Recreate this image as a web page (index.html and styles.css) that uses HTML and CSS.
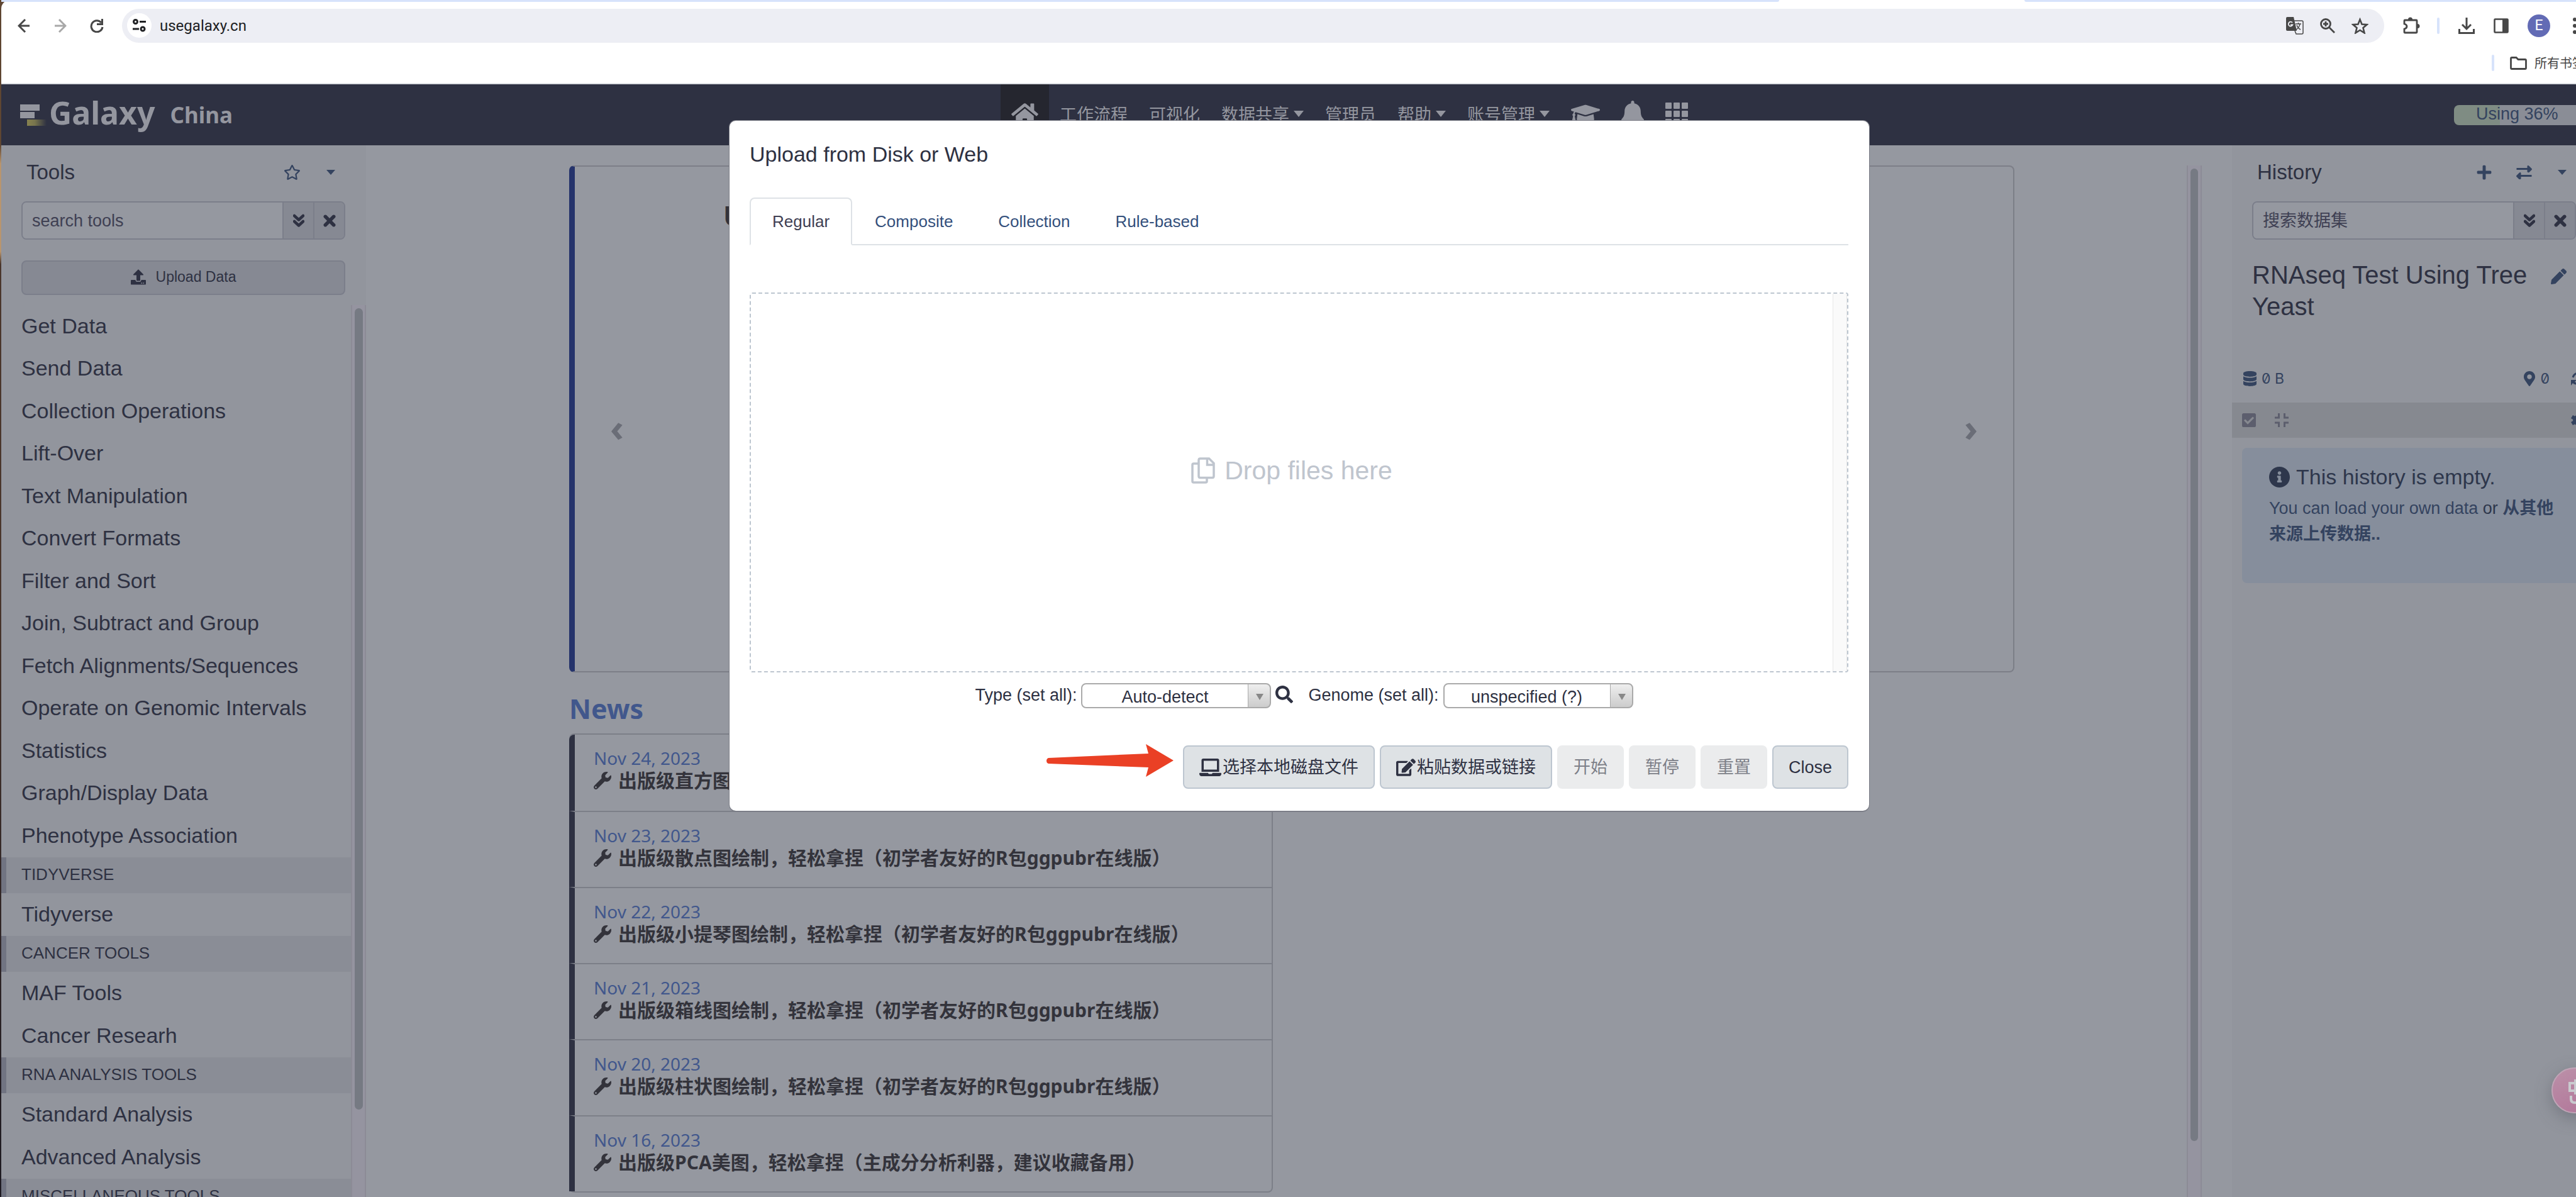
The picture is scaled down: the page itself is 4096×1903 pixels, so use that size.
FILE: index.html
```html
<!DOCTYPE html>
<html lang="zh-CN">
<head>
<meta charset="utf-8">
<title>Galaxy | China</title>
<link rel="stylesheet" href="styles.css">
</head>
<body>
<svg class="sprite" aria-hidden="true">
  <symbol id="i-home" viewBox="0 0 576 512"><path d="M280.37 148.26L96 300.11V464a16 16 0 0 0 16 16l112.06-.29a16 16 0 0 0 15.92-16V368a16 16 0 0 1 16-16h64a16 16 0 0 1 16 16v95.64a16 16 0 0 0 16 16.05L464 480a16 16 0 0 0 16-16V300L295.67 148.26a12.19 12.19 0 0 0-15.3 0zM571.6 251.47L488 182.56V44.05a12 12 0 0 0-12-12h-56a12 12 0 0 0-12 12v72.61L318.47 43a48 48 0 0 0-61 0L4.34 251.47a12 12 0 0 0-1.6 16.9l25.5 31A12 12 0 0 0 45.15 301l235.22-193.74a12.19 12.19 0 0 1 15.3 0L530.9 301a12 12 0 0 0 16.9-1.6l25.5-31a12 12 0 0 0-1.7-16.93z"/></symbol>
  <symbol id="i-cap" viewBox="0 0 640 512"><path d="M622.34 153.2L343.4 67.5c-15.2-4.67-31.6-4.67-46.79 0L17.66 153.2c-23.54 7.23-23.54 38.36 0 45.59l48.63 14.94c-10.67 13.19-17.23 29.28-17.88 46.9C38.78 266.15 32 276.11 32 288c0 10.78 5.68 19.85 13.86 25.65L20.33 428.53C18.11 438.52 25.71 448 35.94 448h56.11c10.24 0 17.84-9.48 15.62-19.47L82.14 313.65C90.32 307.85 96 298.78 96 288c0-11.57-6.47-21.25-15.66-26.87.76-15.02 8.44-28.3 20.69-36.72L296.6 284.5c9.06 2.78 26.44 6.25 46.79 0l278.95-85.7c23.55-7.24 23.55-38.36 0-45.6zM352.79 315.09c-28.53 8.76-52.84 3.92-65.59 0l-145.02-44.55L128 384c0 35.35 85.96 64 192 64s192-28.65 192-64l-14.18-113.47-145.03 44.56z"/></symbol>
  <symbol id="i-bell" viewBox="0 0 448 512"><path d="M224 512c35.32 0 63.97-28.65 63.97-64H160.03c0 35.35 28.65 64 63.97 64zm215.39-149.71c-19.32-20.76-55.47-51.99-55.47-154.29 0-77.7-54.48-139.9-127.94-155.16V32c0-17.67-14.32-32-31.98-32s-31.98 14.33-31.98 32v20.84C118.56 68.1 64.08 130.3 64.08 208c0 102.3-36.15 133.53-55.47 154.29-6 6.45-8.66 14.16-8.61 21.71.11 16.4 12.98 32 32.1 32h383.8c19.12 0 32-15.6 32.1-32 .05-7.55-2.61-15.27-8.61-21.71z"/></symbol>
  <symbol id="i-grid" viewBox="0 0 36 36"><path d="M1 0h8q1 0 1 1v8q0 1-1 1H1q-1 0-1-1V1q0-1 1-1zM14 0h8q1 0 1 1v8q0 1-1 1h-8q-1 0-1-1V1q0-1 1-1zM27 0h8q1 0 1 1v8q0 1-1 1h-8q-1 0-1-1V1q0-1 1-1zM1 13h8q1 0 1 1v8q0 1-1 1H1q-1 0-1-1v-8q0-1 1-1zM14 13h8q1 0 1 1v8q0 1-1 1h-8q-1 0-1-1v-8q0-1 1-1zM27 13h8q1 0 1 1v8q0 1-1 1h-8q-1 0-1-1v-8q0-1 1-1zM1 26h8q1 0 1 1v8q0 1-1 1H1q-1 0-1-1v-8q0-1 1-1zM14 26h8q1 0 1 1v8q0 1-1 1h-8q-1 0-1-1v-8q0-1 1-1zM27 26h8q1 0 1 1v8q0 1-1 1h-8q-1 0-1-1v-8q0-1 1-1z"/></symbol>
  <symbol id="i-star" viewBox="20 0 536 512"><path d="M528.1 171.5L382 150.2 316.7 17.8c-11.7-23.6-45.6-23.9-57.4 0L194 150.2 47.9 171.5c-26.2 3.8-36.7 36.1-17.7 54.6l105.7 103-25 145.5c-4.5 26.3 23.2 46 46.4 33.7L288 439.6l130.7 68.7c23.2 12.2 50.9-7.4 46.4-33.7l-25-145.5 105.7-103c19-18.5 8.5-50.8-17.7-54.6zM388.6 312.3l23.7 138.4L288 385.4l-124.3 65.3 23.7-138.4-100.6-98 139-20.2 62.2-126 62.2 126 139 20.2-100.6 98z"/></symbol>
  <symbol id="i-upload" viewBox="0 0 512 512"><path d="M296 384h-80c-13.3 0-24-10.7-24-24V192h-87.7c-17.8 0-26.7-21.5-14.1-34.1L242.3 5.7c7.5-7.5 19.8-7.5 27.3 0l152.2 152.2c12.6 12.6 3.7 34.1-14.1 34.1H320v168c0 13.3-10.7 24-24 24zm216-8v112c0 13.3-10.7 24-24 24H24c-13.3 0-24-10.7-24-24V376c0-13.3 10.7-24 24-24h136v8c0 30.9 25.1 56 56 56h80c30.9 0 56-25.1 56-56v-8h136c13.3 0 24 10.7 24 24zm-124 88c0-11-9-20-20-20s-20 9-20 20 9 20 20 20 20-9 20-20zm64 0c0-11-9-20-20-20s-20 9-20 20 9 20 20 20 20-9 20-20z"/></symbol>
  <symbol id="i-times" viewBox="0 0 18 18"><path d="M3 3l12 12M15 3L3 15" fill="none" stroke="currentColor" stroke-width="5" stroke-linecap="round"/></symbol>
  <symbol id="i-down2" viewBox="0 0 18 22"><path d="M2 3l7 6.500 7-6.500M2 12l7 6.500 7-6.500" fill="none" stroke="currentColor" stroke-width="4.500" stroke-linecap="round" stroke-linejoin="round"/></symbol>
  <symbol id="i-plus" viewBox="0 0 448 512"><path d="M416 208H272V64c0-17.67-14.33-32-32-32h-32c-17.67 0-32 14.33-32 32v144H32c-17.67 0-32 14.33-32 32v32c0 17.67 14.33 32 32 32h144v144c0 17.67 14.33 32 32 32h32c17.67 0 32-14.33 32-32V304h144c17.67 0 32-14.33 32-32v-32c0-17.67-14.33-32-32-32z"/></symbol>
  <symbol id="i-swap" viewBox="0 0 24 22"><path d="M0 4h17V1q1-2 3 0l4 4q1 1 0 2l-4 4q-2 1-3-1V7H0zM24 15H7v-3q-1-2-3 0l-4 4q-1 1 0 2l4 4q2 1 3-1v-3h17z"/></symbol>
  <symbol id="i-pencil" viewBox="0 0 512 512"><path d="M497.9 142.1l-46.1 46.1c-4.700 4.700-12.300 4.700-17 0l-111-111c-4.700-4.700-4.700-12.300 0-17l46.1-46.1c18.700-18.700 49.1-18.700 67.900 0l60.1 60.1c18.800 18.700 18.800 49.1 0 67.900zM284.200 99.800L21.600 362.400.4 483.900c-2.900 16.400 11.400 30.600 27.800 27.800l121.500-21.300 262.600-262.600c4.700-4.700 4.700-12.300 0-17l-111-111c-4.800-4.700-12.400-4.700-17.100 0z"/></symbol>
  <symbol id="i-db" viewBox="0 0 448 512"><path d="M448 73.143v45.714C448 159.143 347.667 192 224 192S0 159.143 0 118.857V73.143C0 32.857 100.333 0 224 0s224 32.857 224 73.143zM448 176v102.857C448 319.143 347.667 352 224 352S0 319.143 0 278.857V176c48.125 33.143 136.208 48.572 224 48.572S399.874 209.143 448 176zm0 160v102.857C448 479.143 347.667 512 224 512S0 479.143 0 438.857V336c48.125 33.143 136.208 48.572 224 48.572S399.874 369.143 448 336z"/></symbol>
  <symbol id="i-pin" viewBox="0 0 384 512"><path d="M172.268 501.67C26.97 291.031 0 269.413 0 192 0 85.961 85.961 0 192 0s192 85.961 192 192c0 77.413-26.97 99.031-172.268 309.67-9.535 13.774-29.93 13.773-39.464 0zM192 272c44.183 0 80-35.817 80-80s-35.817-80-80-80-80 35.817-80 80 35.817 80 80 80z"/></symbol>
  <symbol id="i-sync" viewBox="0 0 24 24"><path d="M3 10a9.500 9.500 0 0 1 17-3M21 14a9.500 9.500 0 0 1-16 4" fill="none" stroke="currentColor" stroke-width="3"/><path d="M0 14h9l-3 3 2 3-3 1-2-2-3 4zM24 10h-9l3-3-2-3 3-1 2 2 3-4z"/></symbol>
  <symbol id="i-check" viewBox="0 32 448 448"><path d="M400 480H48c-26.51 0-48-21.490-48-48V80c0-26.510 21.490-48 48-48h352c26.510 0 48 21.490 48 48v352c0 26.510-21.490 48-48 48zm-204.686-98.059l184-184c6.248-6.248 6.248-16.379 0-22.627l-22.627-22.627c-6.248-6.248-16.379-6.249-22.628 0L184 302.745l-70.059-70.059c-6.248-6.248-16.379-6.248-22.628 0l-22.627 22.627c-6.248 6.248-6.248 16.379 0 22.627l104 104c6.249 6.250 16.379 6.250 22.628.001z"/></symbol>
  <symbol id="i-compress" viewBox="0 0 22 22"><path d="M0 7h6.500V0M22 7h-6.500V0M0 15h6.500v7M22 15h-6.500v7" fill="none" stroke="currentColor" stroke-width="3"/></symbol>
  <symbol id="i-gear" viewBox="0 0 24 24"><path d="M12 1v22M2.500 6.500l19 11M21.500 6.500l-19 11" fill="none" stroke="currentColor" stroke-width="6"/><circle cx="12" cy="12" r="8"/></symbol>
  <symbol id="i-info" viewBox="8 8 496 496"><path d="M256 8C119.043 8 8 119.083 8 256c0 136.997 111.043 248 248 248s248-111.003 248-248C504 119.083 392.957 8 256 8zm0 110c23.196 0 42 18.804 42 42s-18.804 42-42 42-42-18.804-42-42 18.804-42 42-42zm56 254c0 6.627-5.373 12-12 12h-88c-6.627 0-12-5.373-12-12v-24c0-6.627 5.373-12 12-12h12v-64h-12c-6.627 0-12-5.373-12-12v-24c0-6.627 5.373-12 12-12h64c6.627 0 12 5.373 12 12v100h12c6.627 0 12 5.373 12 12v24z"/></symbol>
  <symbol id="i-wrench" viewBox="0 0 512 512"><path d="M507.73 109.1c-2.240-9.030-13.540-12.090-20.120-5.510l-74.360 74.360-67.880-11.310-11.310-67.880 74.360-74.360c6.620-6.620 3.430-17.900-5.660-20.160-47.380-11.740-99.550.91-136.580 37.930-39.640 39.640-50.550 97.100-34.050 147.200L18.740 402.760c-24.990 24.990-24.990 65.510 0 90.500 24.990 24.990 65.510 24.990 90.500 0l213.210-213.210c50.120 16.710 107.470 5.680 147.370-34.220 37.070-37.070 49.700-89.320 37.910-136.730zM64 472c-13.250 0-24-10.750-24-24 0-13.260 10.750-24 24-24s24 10.740 24 24c0 13.250-10.750 24-24 24z"/></symbol>
  <symbol id="i-search" viewBox="0 0 512 512"><path d="M505 442.7L405.3 343c-4.500-4.500-10.600-7-17-7H372c27.600-35.300 44-79.700 44-128C416 93.1 322.9 0 208 0S0 93.1 0 208s93.1 208 208 208c48.300 0 92.700-16.400 128-44v16.300c0 6.400 2.500 12.500 7 17l99.700 99.700c9.400 9.400 24.600 9.400 33.900 0l28.300-28.300c9.400-9.400 9.400-24.600.1-34zM208 336c-70.700 0-128-57.200-128-128 0-70.700 57.200-128 128-128 70.700 0 128 57.200 128 128 0 70.700-57.200 128-128 128z"/></symbol>
  <symbol id="i-laptop" viewBox="0 0 640 512"><path d="M624 416H381.54c-.74 19.810-14.710 32-32.740 32H288c-18.690 0-33.020-17.470-32.770-32H16c-8.800 0-16 7.200-16 16v16c0 35.200 28.800 64 64 64h512c35.200 0 64-28.800 64-64v-16c0-8.800-7.200-16-16-16zM576 48c0-26.400-21.600-48-48-48H112C85.600 0 64 21.600 64 48v336h512V48zm-64 272H128V64h384v256z"/></symbol>
  <symbol id="i-edit" viewBox="0 0 576 512"><path d="M402.6 83.2l90.2 90.2c3.800 3.800 3.800 10 0 13.800L274.4 405.6l-92.800 10.300c-12.400 1.400-22.900-9.100-21.500-21.500l10.300-92.800L388.8 83.2c3.800-3.800 10-3.800 13.800 0zm162-22.900l-48.800-48.800c-15.200-15.200-39.900-15.200-55.200 0l-35.400 35.400c-3.800 3.800-3.800 10 0 13.800l90.2 90.2c3.800 3.800 10 3.800 13.800 0l35.400-35.400c15.200-15.300 15.200-40 0-55.200zM384 346.2V448H64V128h229.800c3.200 0 6.200-1.300 8.500-3.500l40-40c7.600-7.600 2.200-20.500-8.500-20.500H48C21.5 64 0 85.5 0 112v352c0 26.500 21.500 48 48 48h352c26.500 0 48-21.500 48-48V306.2c0-10.700-12.900-16-20.500-8.500l-40 40c-2.200 2.300-3.500 5.300-3.500 8.500z"/></symbol>
  <symbol id="i-copy" viewBox="0 0 38 42"><path d="M12 10H4q-2 0-2 2v26q0 2 2 2h19q2 0 2-2v-5M14.500 2h14L36 9.500V30q0 2.500-2.500 2.500h-19Q12 32.500 12 30V4.500Q12 2 14.500 2zM25.500 2v10H36" fill="none" stroke="currentColor" stroke-width="3.500"/></symbol>
</svg>

<header class="browser">
  <div class="tabstrip"><span class="tab-rest"></span><span class="tab-gap"></span><span class="tab-more"></span></div>
  <div class="toolbar">
    <button class="tool-btn" aria-label="Back"><svg width="20" height="24" viewBox="0 0 20 24"><path d="M19 12H3M12 2L2 12l10 10" fill="none" stroke="currentColor" stroke-width="3"/></svg></button>
    <button class="tool-btn dim" aria-label="Forward"><svg width="20" height="24" viewBox="0 0 20 24"><path d="M1 12h16M8 2l10 10L8 22" fill="none" stroke="currentColor" stroke-width="3"/></svg></button>
    <button class="tool-btn" aria-label="Reload"><svg width="22" height="22" viewBox="0 0 22 22"><path d="M18 6A9 9 0 1 0 20 13" fill="none" stroke="currentColor" stroke-width="3"/><path d="M21 0v10H11V7h7V0z"/></svg></button>
    <div class="omnibox">
      <span class="site"><svg width="21" height="21" viewBox="0 0 21 21"><g fill="none" stroke="currentColor" stroke-width="3"><circle cx="4.500" cy="4.500" r="3"/><circle cx="16" cy="16" r="3"/><path d="M11 4.500h10M0 16h10"/></g></svg></span>
      <input class="url" type="text" value="usegalaxy.cn" aria-label="Address">
      <div class="omni-icons">
        <svg width="28" height="28" viewBox="0 0 28 28"><path d="M2 0h10l5 22H2q-2 0-2-2V2q0-2 2-2z"/><path d="M13 6h12q2 0 2 2v17q0 2-2 2H16l-2-5" fill="none" stroke="currentColor" stroke-width="1.500"/><path d="M15 11h9M19.500 9v2M22 11q-1 6-6 9M17 13q2 5 6 7" fill="none" stroke="currentColor" stroke-width="1.500"/><path d="M10 9a3.500 3.500 0 1 0 .5 3.500H7" fill="none" stroke="#edeef4" stroke-width="1.800"/></svg>
        <svg width="24" height="24" viewBox="0 0 24 24"><g fill="none" stroke="currentColor" stroke-width="2.800"><circle cx="9" cy="9" r="7.500"/><path d="M14.500 14.500L23 23M9 5v8M5 9h8"/></g></svg>
        <svg width="27" height="26" viewBox="0 0 27 26"><path d="M13.500 3l3 7.500 8 .6-6 5.200 2 8-7-4.300-7 4.300 2-8-6-5.200 8-.6z" fill="none" stroke="currentColor" stroke-width="2.600"/></svg>
      </div>
    </div>
    <div class="ext-icons">
      <svg width="27" height="27" viewBox="0 0 27 27"><path d="M2 6q0-1 1-1h18q1 0 1 1v18q0 1-1 1H3q-1 0-1-1v-5q4-1 4-4t-4-4z" fill="none" stroke="currentColor" stroke-width="2.800"/><path d="M8 4a3.500 3.500 0 0 1 7 0zM23 11a3.500 3.500 0 0 1 0 7z"/></svg>
      <span class="bar"></span>
      <svg width="26" height="26" viewBox="0 0 26 26"><path d="M13 0v17M6 11l7 7 7-7M1.500 18v6.500h23V18" fill="none" stroke="currentColor" stroke-width="3"/></svg>
      <svg width="24" height="24" viewBox="0 0 24 24"><rect x="1.500" y="1.500" width="21" height="21" rx="1" fill="none" stroke="currentColor" stroke-width="2.600"/><path d="M14 1h9v22h-9z"/></svg>
      <span class="avatar">E</span>
      <svg width="6" height="28" viewBox="0 0 6 28"><circle cx="3" cy="4" r="3"/><circle cx="3" cy="14" r="3"/><circle cx="3" cy="24" r="3"/></svg>
    </div>
  </div>
  <div class="bookmarks"><span class="bar"></span><svg width="27" height="21" viewBox="0 0 27 21"><path d="M1.500 3q0-1.500 1.500-1.500h7l3 3h11q1.500 0 1.500 1.500v12q0 1.500-1.500 1.500H3q-1.500 0-1.500-1.500z" fill="none" stroke="currentColor" stroke-width="2.800"/></svg><a href="#">所有书签</a></div>
</header>

<div class="app">
  <div class="masthead">
    <a class="brand" href="#">
      <svg width="42" height="34" viewBox="0 0 42 34"><defs><linearGradient id="gold"><stop offset="0" stop-color="#87824f"/><stop offset=".4" stop-color="#77744d"/><stop offset="1" stop-color="#2e3142"/></linearGradient></defs><path d="M0 0h31v10H0zM0 12h23v10H0z"/><path d="M11 24h31v10H11z" fill="url(#gold)"/></svg>
      <span class="brand-name">Galaxy</span><span class="brand-sub">China</span>
    </a>
    <nav>
      <a class="active" href="#" aria-label="Home"><svg width="43" height="38"><use href="#i-home"/></svg></a>
      <a href="#">工作流程</a><a href="#">可视化</a><a class="caret" href="#">数据共享</a><a href="#">管理员</a><a class="caret" href="#">帮助</a><a class="caret" href="#">账号管理</a>
      <a href="#" aria-label="Tutorials"><svg width="46" height="37"><use href="#i-cap"/></svg></a>
      <a href="#" aria-label="Notifications"><svg width="36" height="41"><use href="#i-bell"/></svg></a>
      <a href="#" aria-label="Apps"><svg width="36" height="36"><use href="#i-grid"/></svg></a>
    </nav>
    <a class="usage" href="#">Using 36%</a>
  </div>

  <div class="columns">
    <aside class="tools">
      <div class="panel-head"><h2>Tools</h2>
        <button class="icon-btn" aria-label="Favorites"><svg width="25" height="24"><use href="#i-star"/></svg></button>
        <button class="icon-btn" aria-label="Menu"><span class="tri"></span></button></div>
      <div class="search"><input type="text" placeholder="search tools" aria-label="search tools"><button aria-label="Advanced"><svg width="18" height="22"><use href="#i-down2"/></svg></button><button aria-label="Clear"><svg width="20" height="20"><use href="#i-times"/></svg></button></div>
      <button class="upload"><svg width="24" height="25"><use href="#i-upload"/></svg>Upload Data</button>
      <div class="scroller">
        <div class="toolbox">
          <ul class="first"><li><a href="#">Get Data</a></li><li><a href="#">Send Data</a></li><li><a href="#">Collection Operations</a></li><li><a href="#">Lift-Over</a></li><li><a href="#">Text Manipulation</a></li><li><a href="#">Convert Formats</a></li><li><a href="#">Filter and Sort</a></li><li><a href="#">Join, Subtract and Group</a></li><li><a href="#">Fetch Alignments/Sequences</a></li><li><a href="#">Operate on Genomic Intervals</a></li><li><a href="#">Statistics</a></li><li><a href="#">Graph/Display Data</a></li><li><a href="#">Phenotype Association</a></li></ul>
          <h3>TIDYVERSE</h3>
          <ul><li><a href="#">Tidyverse</a></li></ul>
          <h3>CANCER TOOLS</h3>
          <ul><li><a href="#">MAF Tools</a></li><li><a href="#">Cancer Researh</a></li></ul>
          <h3>RNA ANALYSIS TOOLS</h3>
          <ul><li><a href="#">Standard Analysis</a></li><li><a href="#">Advanced Analysis</a></li></ul>
          <h3>MISCELLANEOUS TOOLS</h3>
        </div>
        <div class="track"><div class="thumb thumb-tools"></div></div>
      </div>
    </aside>

    <main>
      <div class="page">
        <section class="carousel"><button aria-label="Previous">‹</button><h1>U</h1><button aria-label="Next">›</button></section>
        <div class="page-cols">
          <section>
            <h2 class="news-title">News</h2>
            <ul class="news">
              <li><time>Nov 24, 2023</time><a href="#"><svg width="28" height="28"><use href="#i-wrench"/></svg>出版级直方图绘制</a></li>
              <li><time>Nov 23, 2023</time><a href="#"><svg width="28" height="28"><use href="#i-wrench"/></svg>出版级散点图绘制，轻松拿捏（初学者友好的R包ggpubr在线版）</a></li>
              <li><time>Nov 22, 2023</time><a href="#"><svg width="28" height="28"><use href="#i-wrench"/></svg>出版级小提琴图绘制，轻松拿捏（初学者友好的R包ggpubr在线版）</a></li>
              <li><time>Nov 21, 2023</time><a href="#"><svg width="28" height="28"><use href="#i-wrench"/></svg>出版级箱线图绘制，轻松拿捏（初学者友好的R包ggpubr在线版）</a></li>
              <li><time>Nov 20, 2023</time><a href="#"><svg width="28" height="28"><use href="#i-wrench"/></svg>出版级柱状图绘制，轻松拿捏（初学者友好的R包ggpubr在线版）</a></li>
              <li><time>Nov 16, 2023</time><a href="#"><svg width="28" height="28"><use href="#i-wrench"/></svg>出版级PCA美图，轻松拿捏（主成分分析利器，建议收藏备用）</a></li>
            </ul>
          </section>
        </div>
      </div>
      <div class="track"><div class="thumb thumb-main"></div></div>
    </main>

    <aside class="history">
      <div class="panel-head"><h2>History</h2>
        <button class="icon-btn" aria-label="Create"><svg width="24" height="26"><use href="#i-plus"/></svg></button>
        <button class="icon-btn" aria-label="Switch"><svg width="25" height="22"><use href="#i-swap"/></svg></button>
        <button class="icon-btn" aria-label="Menu"><span class="tri"></span></button></div>
      <div class="search"><input type="text" placeholder="搜索数据集" aria-label="搜索数据集"><button aria-label="Advanced"><svg width="18" height="22"><use href="#i-down2"/></svg></button><button aria-label="Clear"><svg width="20" height="20"><use href="#i-times"/></svg></button></div>
      <div class="hist-name"><h3>RNAseq Test Using Tree Yeast</h3><button class="icon-btn" aria-label="Edit"><svg width="25" height="25"><use href="#i-pencil"/></svg></button></div>
      <div class="stats"><a href="#"><svg width="21" height="24"><use href="#i-db"/></svg>0 B</a><span class="right"><a href="#"><svg width="18" height="24"><use href="#i-pin"/></svg>0</a><svg width="24" height="24"><use href="#i-sync"/></svg></span></div>
      <div class="ops"><svg width="22" height="22"><use href="#i-check"/></svg><svg width="22" height="22"><use href="#i-compress"/></svg><svg class="gear" width="24" height="24"><use href="#i-gear"/></svg></div>
      <div class="alert"><h4><svg width="33" height="33"><use href="#i-info"/></svg>This history is empty.</h4><p><a href="#">You can load your own data</a> or <a class="strong" href="#">从其他<br>来源上传数据..</a></p></div>
    </aside>
  </div>
</div>

<div class="ball"><svg width="40" height="42" viewBox="0 0 40 42"><path d="M5 6h22v12H5zM14 0v24M7 26v5q0 6 6 6h18" fill="none" stroke="#c9cace" stroke-width="4"/></svg></div>

<div class="overlay">
  <div class="modal" role="dialog" aria-labelledby="mt">
    <h2 id="mt">Upload from Disk or Web</h2>
    <div class="tabs"><a class="on" href="#">Regular</a><a href="#">Composite</a><a href="#">Collection</a><a href="#">Rule-based</a></div>
    <div class="drop"><div class="drop-hint"><svg width="38" height="42"><use href="#i-copy"/></svg>Drop files here</div><div class="drop-track"></div></div>
    <div class="settings">
      <label for="ty">Type (set all):</label>
      <span class="sel"><select id="ty"><option>Auto-detect</option></select></span>
      <svg width="28" height="28"><use href="#i-search"/></svg>
      <label class="genome" for="ge">Genome (set all):</label>
      <span class="sel"><select id="ge"><option>unspecified (?)</option></select></span>
    </div>
    <div class="foot">
      <button><svg width="35" height="28"><use href="#i-laptop"/></svg>选择本地磁盘文件</button>
      <button><svg width="31" height="28"><use href="#i-edit"/></svg>粘贴数据或链接</button>
      <button disabled>开始</button><button disabled>暂停</button><button disabled>重置</button>
      <button>Close</button>
    </div>
    <svg class="pointer" width="202" height="52" viewBox="0 0 202 52"><path d="M3 22L162 15 158 0 202 26 158 52 162 37 3 31Q0 30 0 26.500T3 22z" fill="#ea4025"/></svg>
  </div>
</div>
</body>
</html>
```
FILE: styles.css
```css
* { box-sizing: border-box; }

body {
  margin: 0;
  padding-left: 2px;
  height: 100vh;
  overflow: hidden;
  position: relative;
  display: flex;
  flex-direction: column;
  background: linear-gradient(#5f4632 0 230px, #b8956e 260px 400px, #4a362c 420px 900px, #1d1a22);
  font: 27px/40px "Liberation Sans", "Noto Sans CJK SC", sans-serif;
  color: #2e3142;
}

h1, h2, h3, h4, p, ul { margin: 0; padding: 0; font-weight: 400; }
ul { list-style: none; }
a { color: inherit; text-decoration: none; }
button, input, select { font: inherit; color: inherit; margin: 0; padding: 0; border: 0; background: none; }
svg { fill: currentColor; flex: none; display: block; }
.sprite { position: absolute; width: 0; height: 0; }

/* browser frame */
.browser { background: #fff; height: 134px; flex: none; border-bottom: 2px solid #dfe1e5; color: #474747; border-top-left-radius: 14px; }
.tabstrip { display: flex; height: 3px; }
.tab-rest { flex: 2827; background: #d7e3fb; border-bottom-right-radius: 8px; }
.tab-gap { flex: 390; }
.tab-more { flex: 877; background: #d7e3fb; border-bottom-left-radius: 8px; }
.toolbar { display: flex; align-items: center; padding: 10px 0 0 25px; height: 65px; }
.tool-btn { width: 22px; margin-right: 36px; display: flex; justify-content: center; }
.tool-btn.dim { color: #a8a8a8; }
.tool-btn:nth-child(3) { margin-right: 29px; }
.omnibox { flex: 1; display: flex; align-items: center; height: 54px; border-radius: 27px; background: #edeef4; padding: 0 25px 0 8px; }
.site { width: 39px; height: 39px; border-radius: 50%; background: #fff; display: grid; place-items: center; color: #202124; margin-right: 13px; }
.url { flex: 1; height: 40px; font: 24px/40px Roboto, sans-serif; color: #202124; }
.omni-icons { display: flex; align-items: center; gap: 26px; }
.ext-icons { display: flex; align-items: center; gap: 30px; width: 305px; padding-left: 30px; overflow: hidden; }
.bar { width: 4px; height: 26px; border-radius: 2px; background: #d7e3fb; flex: none; }
.ext-icons .bar { margin-left: -3px; }
.avatar { width: 36px; height: 36px; border-radius: 50%; background: #626bb5; color: #fff; font: 23px/36px Roboto, sans-serif; text-align: center; flex: none; }
.ext-icons .avatar + svg { margin-left: 6px; }
.bookmarks { display: flex; align-items: center; gap: 25px; height: 64px; margin-left: auto; width: 134px; overflow: hidden; white-space: nowrap; font: 20px/30px "Noto Sans CJK SC", sans-serif; }
.bookmarks a { margin-left: -13px; }

/* masthead */
.app { flex: 1; min-height: 0; display: flex; flex-direction: column; }
.masthead { height: 97px; flex: none; background: #2e3142; color: #94969f; display: grid; grid-template-columns: 1589px 1fr 194px; font-size: 27px; }
.brand { display: flex; align-items: center; padding-left: 30px; font-family: "Noto Sans", sans-serif; font-weight: 700; }
.brand-name { font-size: 50px; margin-left: 4px; padding-bottom: 8px; }
.brand-sub { font-size: 35px; margin-left: 24px; }
nav { display: flex; font-family: "Noto Sans CJK SC", sans-serif; }
nav a { display: flex; align-items: center; padding: 0 17px 4px; white-space: nowrap; }
nav .active { background: #25262f; }
nav .caret::after, .tri { content: ""; border: 8px solid transparent; border-top: 10px solid currentColor; border-bottom: 0; margin-left: 7px; }
.tri { display: block; margin: 0; border-width: 8px 7px 0; }
.usage { align-self: center; height: 32px; line-height: 28px; padding-left: 35px; border-radius: 8px 0 0 8px; background: linear-gradient(90deg, #7f8c83 73px, #8a8d96 73px); color: #34435f; }

/* columns */
.columns { flex: 1; min-height: 0; display: grid; grid-template-columns: 580px 1fr 547px; background: #9598a0; }
.tools, .history { background: #92959d; overflow: hidden; min-height: 0; display: flex; flex-direction: column; }
.panel-head { display: flex; align-items: center; height: 89px; flex: none; padding: 0 0 4px 40px; color: #34435f; }
.panel-head h2 { flex: 1; font-size: 33px; color: #2e3142; }
.icon-btn { display: flex; align-items: center; }
.tools .icon-btn { margin-right: 49px; }
.tools .icon-btn:nth-child(2) { margin-right: 42px; }
.search { display: flex; height: 61px; flex: none; border: 2px solid #7b7e8a; border-radius: 8px; margin: 0 33px 0 32px; overflow: hidden; }
.search input { flex: 1; min-width: 0; padding-left: 15px; background: #9598a0; }
.search input::placeholder { color: #3f4053; opacity: 1; }
.search button { width: 49px; display: grid; place-items: center; background: #868993; border-left: 2px solid #7b7e8a; flex: none; }
.upload { display: flex; align-items: center; justify-content: center; gap: 16px; margin: 33px 33px 16px 32px; padding-bottom: 3px; height: 55px; flex: none; font-size: 23px; border: 2px solid #7b7e8a; border-radius: 8px; background: #868993; }
.scroller { flex: 1; min-height: 0; display: flex; }
.toolbox { flex: 1; overflow: hidden; }
.toolbox ul { padding: 1px 0 0; }
.toolbox .first { padding: 1px 0 0; }
.toolbox li a { display: block; height: 67px; line-height: 65px; padding-left: 32px; font-size: 34px; }
.toolbox li + li { margin-top: 1px; }
.toolbox .first li:nth-child(even) { margin-top: 0; }
.toolbox h3 { height: 57px; line-height: 55px; padding-left: 24px; border-left: 8px solid #717482; background: #8a8d96; font-size: 26px; }
.track { width: 24px; flex: none; padding: 5px 4px 0; background: #9594a0; border: solid #8c8b96; border-width: 0 2px; }
.thumb { border-radius: 7px; background: #767a83; }
.thumb-tools { height: 1274px; margin-right: -1px; }
.thumb-main { height: 1546px; }

/* centre page */
main { display: flex; padding: 32px 48px 0 0; min-height: 0; overflow: hidden; font-family: "Noto Sans", "Noto Sans CJK SC", sans-serif; }
.page { flex: 1; padding: 0 274px 0 323px; }
.carousel { height: 806px; display: flex; align-items: center; border: 2px solid #7c7e87; border-left: 9px solid #25336b; border-radius: 8px; padding: 26px 56px 0; color: #6a6d77; }
.carousel button { font: 700 60px/60px "Noto Sans", sans-serif; }
.carousel h1 { flex: 1; align-self: flex-start; padding: 22px 0 0 158px; font: 700 43px/60px "Noto Sans", sans-serif; color: #33333b; }
.page-cols { display: grid; grid-template-columns: 1fr 1fr; gap: 60px; }
.news-title { font: 700 43px/60px "Noto Sans", sans-serif; color: #41578c; margin: 28px 0 9px; }
.news { border: 2px solid #7c7f88; border-left: 0; border-radius: 8px; }
.news li { height: 121px; padding: 18px 0 0 30px; border-left: 9px solid #2e3142; border-top: 2px solid #7c7f88; }
.news li:first-child { border-top: 0; border-top-left-radius: 8px; }
.news time { display: block; font-size: 28px; line-height: 38px; color: #41578c; }
.news a { display: flex; align-items: center; gap: 11px; height: 34px; line-height: 34px; font-size: 30px; font-weight: 700; color: #33333b; white-space: nowrap; }

/* history */
.history .icon-btn { margin-right: 41px; }
.history .panel-head .icon-btn:last-child { margin-right: 15px; }
.history .icon-btn:nth-child(2) { margin-right: 39px; }
.history .search { margin-right: 0; }
.hist-name { display: flex; align-items: flex-start; margin: 31px 0 0 32px; color: #34435f; }
.hist-name h3 { flex: 1; font-size: 40px; line-height: 50px; color: #2e3142; }
.history .hist-name .icon-btn { height: 54px; margin-right: 15px; }
.stats { display: flex; align-items: center; height: 76px; margin-top: 52px; padding-left: 18px; color: #34435f; font: 23px/30px Inter, sans-serif; font-feature-settings: "zero"; overflow: hidden; flex: none; }
.stats a { display: flex; align-items: center; gap: 8px; }
.stats .right { display: flex; align-items: center; gap: 34px; margin-left: auto; margin-right: -16px; }
.ops { display: flex; align-items: center; gap: 30px; height: 56px; flex: none; padding-left: 16px; background: #868990; color: #5c5e6d; overflow: hidden; }
.gear { margin-left: auto; margin-right: -15px; color: #34435f; }
.alert { margin: 16px 0 0 16px; padding: 26px 0 57px 43px; border-radius: 8px 0 0 8px; background: #868e9c; color: #2e374c; }
.alert h4 { display: flex; align-items: center; gap: 10px; height: 40px; font-size: 34px; }
.alert p { margin-top: 10px; line-height: 41px; white-space: nowrap; }
.alert a { color: #34435f; }
.alert .strong { font-weight: 700; }

/* floating assistant */
.ball { position: absolute; right: -34px; bottom: 133px; width: 73px; height: 73px; border-radius: 50%; border: 2px solid #c0a4b6; background: linear-gradient(160deg, #bb90a8, #b2779a); box-shadow: 0 8px 24px rgba(90, 94, 104, .5); padding: 17px 0 0 22px; overflow: hidden; }

/* upload dialog */
.overlay { position: absolute; top: 192px; left: 0; right: 0; display: flex; justify-content: center; padding-left: 36px; }
.modal { position: relative; width: 1812px; padding: 28px 33px 35px 32px; background: #fff; border-radius: 10px; box-shadow: 0 0 0 1px #7c7e87, 0 2px 0 #7c7e87; }
.modal h2 { font-size: 34px; line-height: 50px; margin-bottom: 44px; }
.tabs { display: flex; height: 76px; border-bottom: 2px solid #dee2e6; color: #34507c; }
.tabs a { padding: 0 34px; border: 2px solid transparent; line-height: 72px; height: 76px; font-size: 26px; }
.tabs .on { color: #3f4053; border-color: #dee2e6; border-bottom-color: #fff; border-radius: 8px 8px 0 0; background: #fff; }
.drop { display: flex; margin-top: 75px; height: 604px; border: 2px dashed #bdc6d0; border-radius: 4px; }
.drop-hint { flex: 1; display: flex; align-items: center; justify-content: center; gap: 15px; padding: 0 0 38px 0; font-size: 41px; color: #bfc5ce; }
.drop-track { width: 23px; background: #fafafa; border: solid #e8e8e8; border-width: 0 1px; }
.settings { display: flex; align-items: center; justify-content: center; gap: 7px; padding-left: 16px; margin-top: 17px; height: 40px; }
.settings .genome { margin-left: 17px; }
.settings label { padding-bottom: 2px; }
.settings > svg { margin-bottom: 5px; }
.sel { width: 302px; height: 40px; position: relative; }
.sel select { width: 100%; height: 40px; appearance: none; border: 2px solid #aaa; border-radius: 8px; padding: 0 36px 2px 0; text-align: center; text-align-last: center; background: linear-gradient(#aaa, #aaa) right 34px top / 1px 100% no-repeat, linear-gradient(#eee, #ccc) right / 34px 100% no-repeat, #fff; }
.sel::after { content: ""; position: absolute; right: 12px; top: 17px; border: 6px solid transparent; border-top: 10px solid #888; border-bottom: 0; }
.foot { display: flex; justify-content: flex-end; gap: 8px; margin-top: 59px; }
.foot button { display: flex; align-items: center; gap: 2px; height: 69px; padding: 0 24px; border: 2px solid #bdc6d0; border-radius: 8px; background: #dee2e5; white-space: nowrap; }
.foot button:disabled { background: #ebeced; border-color: #ebeced; color: #7d7f88; }
.pointer { position: absolute; right: 1106px; bottom: 54px; }
```
